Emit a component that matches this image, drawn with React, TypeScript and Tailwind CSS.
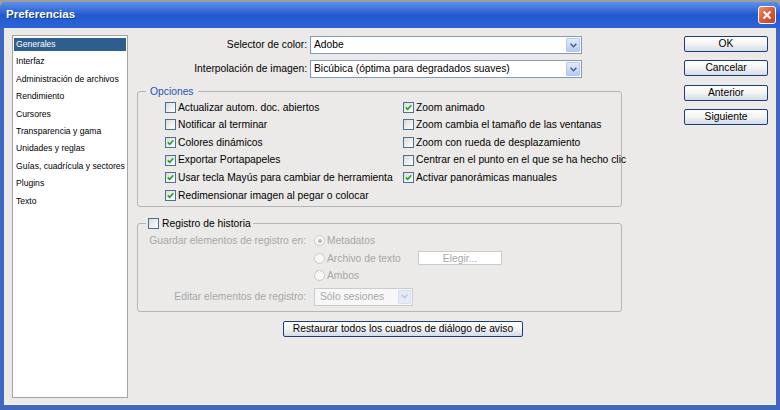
import type { ReactNode } from "react";

const LIST_ITEMS = [
  "Generales",
  "Interfaz",
  "Administración de archivos",
  "Rendimiento",
  "Cursores",
  "Transparencia y gama",
  "Unidades y reglas",
  "Guías, cuadrícula y sectores",
  "Plugins",
  "Texto",
];

const LEFT_OPTIONS = [
  { label: "Actualizar autom. doc. abiertos", checked: false },
  { label: "Notificar al terminar", checked: false },
  { label: "Colores dinámicos", checked: true },
  { label: "Exportar Portapapeles", checked: true },
  { label: "Usar tecla Mayús para cambiar de herramienta", checked: true },
  { label: "Redimensionar imagen al pegar o colocar", checked: true },
];

const RIGHT_OPTIONS = [
  { label: "Zoom animado", checked: true },
  { label: "Zoom cambia el tamaño de las ventanas", checked: false },
  { label: "Zoom con rueda de desplazamiento", checked: false },
  { label: "Centrar en el punto en el que se ha hecho clic", checked: false },
  { label: "Activar panorámicas manuales", checked: true },
];

function Checkbox({ checked }: { checked: boolean }) {
  return (
    <span className="flex h-[11px] w-[11px] shrink-0 items-center justify-center border border-[#4a6f98] bg-gradient-to-br from-[#dcdcd7] to-white">
      {checked && (
        <svg viewBox="0 0 7 7" className="h-[7px] w-[7px]">
          <path
            d="M0.8 3.4 L2.7 5.3 L6.3 1.3"
            fill="none"
            stroke="#21a121"
            strokeWidth="1.6"
          />
        </svg>
      )}
    </span>
  );
}

function CheckRow({ label, checked }: { label: string; checked: boolean }) {
  return (
    <div className="flex h-[17.6px] items-center gap-[2px] whitespace-nowrap">
      <Checkbox checked={checked} />
      <span>{label}</span>
    </div>
  );
}

function Radio({ selected, label }: { selected?: boolean; label: ReactNode }) {
  return (
    <div className="flex items-center gap-[2px] whitespace-nowrap">
      <span className="flex h-[11px] w-[11px] items-center justify-center rounded-full border border-[#cbcbcb] bg-[#f6f6f6]">
        {selected && <span className="h-[4px] w-[4px] rounded-full bg-[#b8b8b8]" />}
      </span>
      {label}
    </div>
  );
}

function Chevron({ disabled }: { disabled?: boolean }) {
  return (
    <svg viewBox="0 0 7 5" className="h-[5px] w-[7px]">
      <path
        d="M0.6 0.8 L3.5 3.7 L6.4 0.8"
        fill="none"
        stroke={disabled ? "#bac5d8" : "#4d6185"}
        strokeWidth="1.5"
      />
    </svg>
  );
}

function XpButton({ children, className = "" }: { children: ReactNode; className?: string }) {
  return (
    <button
      type="button"
      className={`flex h-[16px] items-center justify-center rounded-[2px] border border-[#1d3d74] bg-gradient-to-b from-white via-[#f3f3f1] to-[#d2dcea] leading-none text-black ${className}`}
    >
      {children}
    </button>
  );
}

export default function App() {
  return (
    <div className="h-[410px] w-[780px] overflow-hidden bg-[#9d9d9d] pt-[2px] font-['Liberation_Sans',Arial,sans-serif] text-[10.3px] text-black">
      <div className="flex h-[408px] flex-col rounded-t-[6px] bg-[#3f67bf]">
        {/* title bar */}
        <div className="flex h-[26px] items-center justify-between rounded-t-[6px] bg-gradient-to-b from-[#5d90ea] via-[#2459cf] to-[#2c64d8] pl-[6px] pr-[4px]">
          <span className="text-[11.5px] font-bold text-white [text-shadow:1px_1px_0_#173c8c]">
            Preferencias
          </span>
          <span className="flex h-[18px] w-[18px] items-center justify-center rounded-[3px] border border-white bg-gradient-to-br from-[#ec8f6c] via-[#d85a37] to-[#c24524]">
            <svg viewBox="0 0 10 10" className="h-[10px] w-[10px]">
              <path d="M1.5 1.5 L8.5 8.5 M8.5 1.5 L1.5 8.5" stroke="white" strokeWidth="2" />
            </svg>
          </span>
        </div>

        {/* body */}
        <div className="mx-[4px] mb-[5px] flex flex-1 border-b border-[#f6f6f6] bg-[#ebeae8] px-[8px] pt-[7px]">
          {/* category list */}
          <div className="h-[363px] w-[116px] shrink-0 border border-[#a3a3a3] bg-white px-px pt-[2px] text-[8.6px]">
            {LIST_ITEMS.map((item, i) => (
              <div
                key={item}
                className={`mb-[4.4px] flex h-[13px] items-center whitespace-nowrap pl-[2px] ${
                  i === 0 ? "bg-[#2e5d8f] text-white" : "text-black"
                }`}
              >
                {item}
              </div>
            ))}
          </div>

          {/* main column */}
          <div className="ml-[9px] w-[485px] shrink-0">
            <div className="mt-px flex h-[18px] items-center">
              <span className="w-[170px] text-right">Selector de color:</span>
              <div className="ml-[3px] flex h-[18px] w-[272px] items-center border border-[#7f9db9] bg-white pl-[3px] pr-px">
                <span className="flex-1">Adobe</span>
                <span className="flex h-[14px] w-[14px] items-center justify-center rounded-[1px] border border-[#b4c6ea] bg-gradient-to-b from-[#e3ecfd] to-[#b6caf3]">
                  <Chevron />
                </span>
              </div>
            </div>
            <div className="mt-[6px] flex h-[18px] items-center">
              <span className="w-[170px] text-right">Interpolación de imagen:</span>
              <div className="ml-[3px] flex h-[18px] w-[272px] items-center border border-[#7f9db9] bg-white pl-[3px] pr-px">
                <span className="flex-1">Bicúbica (óptima para degradados suaves)</span>
                <span className="flex h-[14px] w-[14px] items-center justify-center rounded-[1px] border border-[#b4c6ea] bg-gradient-to-b from-[#e3ecfd] to-[#b6caf3]">
                  <Chevron />
                </span>
              </div>
            </div>

            {/* Opciones */}
            <fieldset className="mt-[6.5px] w-[485px] min-w-0 rounded-[3px] border border-[#b5b5b5] pb-[2px]">
              <legend className="ml-[8px] px-[4px] leading-[13px] text-[#1f55b3]">Opciones</legend>
              <div className="grid grid-cols-[238px_1fr] pl-[27px] pt-px">
                <div>
                  {LEFT_OPTIONS.map((o) => (
                    <CheckRow key={o.label} label={o.label} checked={o.checked} />
                  ))}
                </div>
                <div>
                  {RIGHT_OPTIONS.map((o) => (
                    <CheckRow key={o.label} label={o.label} checked={o.checked} />
                  ))}
                </div>
              </div>
            </fieldset>

            {/* Registro de historia */}
            <fieldset className="mt-[10.4px] w-[485px] min-w-0 rounded-[3px] border border-[#b5b5b5] pb-[5px] text-[#a7a7a7]">
              <legend className="ml-[8px] inline-flex items-center gap-[3px] px-[2px] leading-[13px] text-black">
                <Checkbox checked={false} />
                <span>Registro de historia</span>
              </legend>
              <div className="pt-[1.75px]">
                <div className="flex h-[17.5px] items-center">
                  <span className="w-[168px] text-right">Guardar elementos de registro en:</span>
                  <div className="ml-[8px]">
                    <Radio selected label="Metadatos" />
                  </div>
                </div>
                <div className="flex h-[17.5px] items-center pl-[176px]">
                  <Radio label={<span className="w-[91px]">Archivo de texto</span>} />
                  <span className="flex h-[14px] w-[84px] items-center justify-center border border-[#cacaca] bg-white">
                    Elegir...
                  </span>
                </div>
                <div className="flex h-[17.5px] items-center pl-[176px]">
                  <Radio label="Ambos" />
                </div>
                <div className="mt-[3px] flex h-[18px] items-center">
                  <span className="w-[168px] text-right">Editar elementos de registro:</span>
                  <div className="ml-[8px] flex h-[18px] w-[99px] items-center border border-[#cbcbcb] bg-[#f7f7f7] pl-[5px] pr-px">
                    <span className="flex-1">Sólo sesiones</span>
                    <span className="flex h-[14px] w-[13px] items-center justify-center rounded-[1px] border border-[#d6e0f0] bg-[#e4ebf7]">
                      <Chevron disabled />
                    </span>
                  </div>
                </div>
              </div>
            </fieldset>

            <XpButton className="ml-[146px] mt-[9.5px] w-[240px]">
              Restaurar todos los cuadros de diálogo de aviso
            </XpButton>
          </div>

          {/* action buttons */}
          <div className="ml-[62px] mt-px flex w-[84px] shrink-0 flex-col gap-[8.4px]">
            <XpButton className="w-[84px]">OK</XpButton>
            <XpButton className="w-[84px]">Cancelar</XpButton>
            <XpButton className="w-[84px]">Anterior</XpButton>
            <XpButton className="w-[84px]">Siguiente</XpButton>
          </div>
        </div>
      </div>
    </div>
  );
}
